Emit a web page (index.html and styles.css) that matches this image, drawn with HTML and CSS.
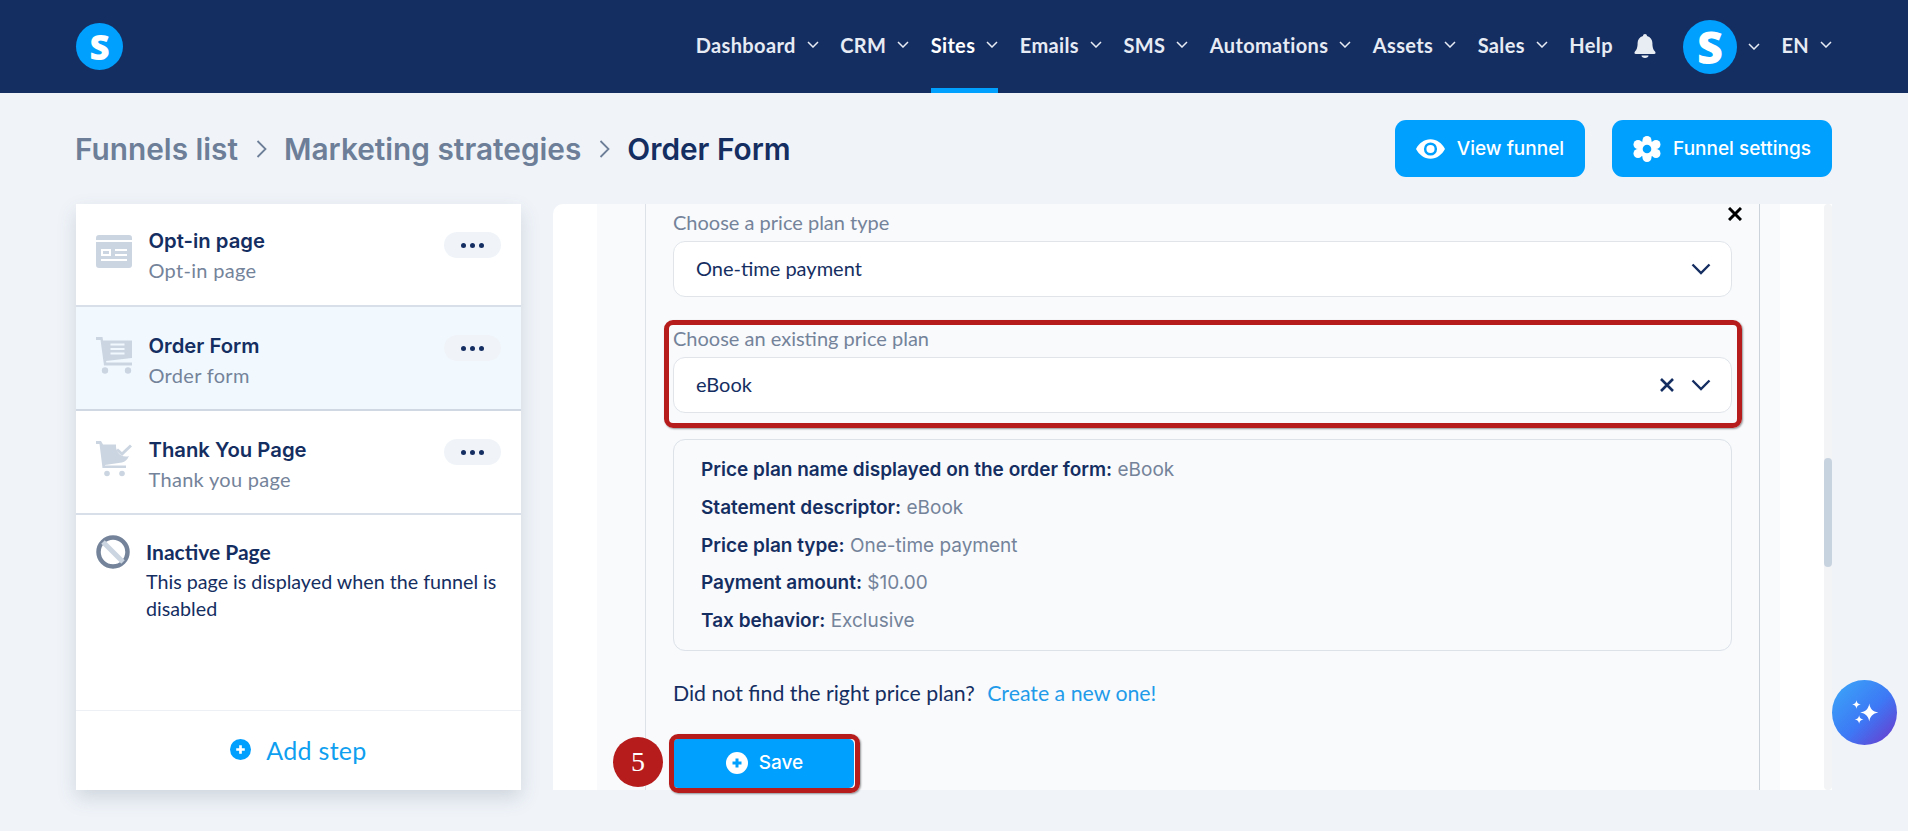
FILE: index.html
```html
<!DOCTYPE html>
<html lang="en">
<head>
<meta charset="utf-8">
<title>Order Form</title>
<link rel="stylesheet" href="styles.css">
</head>
<body>
<header class="topbar">
  <div class="logo">S</div>
  <nav class="nav">
    <a class="nav-item">Dashboard <svg class="chev" viewBox="0 0 12 7"><path d="M1 1l5 5 5-5"/></svg></a>
    <a class="nav-item">CRM <svg class="chev" viewBox="0 0 12 7"><path d="M1 1l5 5 5-5"/></svg></a>
    <a class="nav-item active">Sites <svg class="chev" viewBox="0 0 12 7"><path d="M1 1l5 5 5-5"/></svg></a>
    <a class="nav-item">Emails <svg class="chev" viewBox="0 0 12 7"><path d="M1 1l5 5 5-5"/></svg></a>
    <a class="nav-item">SMS <svg class="chev" viewBox="0 0 12 7"><path d="M1 1l5 5 5-5"/></svg></a>
    <a class="nav-item">Automations <svg class="chev" viewBox="0 0 12 7"><path d="M1 1l5 5 5-5"/></svg></a>
    <a class="nav-item">Assets <svg class="chev" viewBox="0 0 12 7"><path d="M1 1l5 5 5-5"/></svg></a>
    <a class="nav-item">Sales <svg class="chev" viewBox="0 0 12 7"><path d="M1 1l5 5 5-5"/></svg></a>
    <a class="nav-item">Help</a>
    <svg class="bell" viewBox="0 0 22 24"><path d="M11 0c-1.200 0-2 .8-2 1.900C5.500 2.800 3.600 5.700 3.600 9c0 4.800-1 6.800-2.600 8.500-.9 1-.7 2.500.9 2.500h18.200c1.600 0 1.800-1.500.9-2.500-1.600-1.700-2.600-3.700-2.600-8.500 0-3.300-1.900-6.200-5.400-7.100C13 .8 12.200 0 11 0z"/><path d="M7.500 21.500h7c0 1.500-1.500 2.500-3.500 2.500s-3.500-1-3.500-2.500z"/></svg>
    <div class="avatar-wrap">
      <div class="avatar">S</div>
      <svg class="chev" viewBox="0 0 12 7"><path d="M1 1l5 5 5-5"/></svg>
    </div>
    <a class="nav-item">EN <svg class="chev" viewBox="0 0 12 7"><path d="M1 1l5 5 5-5"/></svg></a>
  </nav>
</header>

<main class="page">
  <div class="titlebar">
    <div class="crumbs">
      <span class="crumb">Funnels list</span>
      <svg class="crumb-sep" viewBox="0 0 12 20"><path d="M2 2l8 8-8 8"/></svg>
      <span class="crumb">Marketing strategies</span>
      <svg class="crumb-sep" viewBox="0 0 12 20"><path d="M2 2l8 8-8 8"/></svg>
      <span class="crumb current">Order Form</span>
    </div>
    <div class="actions">
      <button class="btn btn-view">
        <svg class="btn-icon" viewBox="0 0 30 20"><path fill-rule="evenodd" d="M15 0C8.500 0 3.200 4 0 10c3.200 6 8.500 10 15 10s11.800-4 15-10C26.800 4 21.500 0 15 0zm0 3.200a6.800 6.800 0 1 1 0 13.600 6.800 6.800 0 0 1 0-13.600z"/><circle cx="15" cy="10" r="4.200"/></svg>
        View funnel
      </button>
      <button class="btn btn-settings">
        <svg class="btn-icon gear" viewBox="0 0 28 26">
          <circle cx="14" cy="4.500" r="4.500"/><circle cx="23" cy="8.500" r="4.500"/><circle cx="23" cy="17.500" r="4.500"/><circle cx="14" cy="21.500" r="4.500"/><circle cx="5" cy="17.500" r="4.500"/><circle cx="5" cy="8.500" r="4.500"/><circle cx="14" cy="13" r="9"/>
          <circle class="gear-hole" cx="14" cy="13" r="4.300"/>
        </svg>
        Funnel settings
      </button>
    </div>
  </div>

  <div class="workspace">
    <aside class="sidebar">
      <div class="step">
        <svg class="step-icon page-icon" viewBox="0 0 36 33"><path fill-rule="evenodd" d="M3 0h30a3 3 0 0 1 3 3v2H0V3a3 3 0 0 1 3-3zM0 7h36v23a3 3 0 0 1-3 3H3a3 3 0 0 1-3-3zm5 7v7h10v-7zm2 2h6v3H7zm12-2v2h12v-2zm0 5v2h12v-2zM5 24v2h26v-2z"/></svg>
        <div class="step-text">
          <div class="step-title">Opt-in page</div>
          <div class="step-sub">Opt-in page</div>
        </div>
        <div class="dots"><i></i><i></i><i></i></div>
      </div>
      <div class="step selected">
        <svg class="step-icon" viewBox="0 0 36 37"><path fill-rule="evenodd" d="M0 0h6.500L7 3.500h29V21L10 24l.4 1.500H36V28.500H8L4.500 3H0zM14.500 6.500v2h14v-2zm0 4.500v2h14v-2zm0 4.500v2h14v-2z"/><circle cx="9" cy="33.500" r="3.200"/><circle cx="32" cy="33.500" r="3.200"/></svg>
        <div class="step-text">
          <div class="step-title">Order Form</div>
          <div class="step-sub">Order form</div>
        </div>
        <div class="dots"><i></i><i></i><i></i></div>
      </div>
      <div class="step">
        <svg class="step-icon" viewBox="0 0 36 37"><path d="M0 0h5l2 3.500h13c-.5 6 3 12 10 12 1 0 2 0 3-.5-2 4-4 6-7 6.500L9 24v.5h21V27H6.500L3.500 3H0z"/><path class="check" d="M21 8.500l5 4.500 9-8.500"/><circle cx="11" cy="32.500" r="2.800"/><circle cx="26" cy="32.500" r="2.800"/></svg>
        <div class="step-text">
          <div class="step-title">Thank You Page</div>
          <div class="step-sub">Thank you page</div>
        </div>
        <div class="dots"><i></i><i></i><i></i></div>
      </div>
      <div class="inactive">
        <svg class="inactive-icon" viewBox="0 0 34 34"><circle class="ring" cx="17" cy="17" r="14.500"/><path class="slash" d="M7 7l20 20"/></svg>
        <div class="inactive-text">
          <div class="inactive-title">Inactive Page</div>
          <div class="inactive-desc">This page is displayed when the funnel is disabled</div>
        </div>
      </div>
      <div class="add-step">
        <svg class="plus-icon" viewBox="0 0 22 22"><circle class="plus-bg" cx="11" cy="11" r="11"/><path class="plus-mark" d="M11 6.500v9M6.500 11h9"/></svg>
        Add step
      </div>
    </aside>

    <section class="panel">
      <div class="panel-scroll">
        <div class="panel-soft">
          <div class="form-col">
            <svg class="close" viewBox="0 0 14 14"><path d="M1 1l12 12M13 1L1 13"/></svg>
            <div class="field-label">Choose a price plan type</div>
            <div class="select">
              <span class="select-value">One-time payment</span>
              <svg class="select-chev" viewBox="0 0 20 12"><path d="M1.500 1.500L10 10l8.500-8.500"/></svg>
            </div>
            <div class="field-label second">Choose an existing price plan</div>
            <div class="select">
              <span class="select-value">eBook</span>
              <svg class="select-x" viewBox="0 0 14 14"><path d="M1 1l12 12M13 1L1 13"/></svg>
              <svg class="select-chev" viewBox="0 0 20 12"><path d="M1.500 1.500L10 10l8.500-8.500"/></svg>
            </div>
            <div class="info">
              <div class="info-row"><b>Price plan name displayed on the order form:</b> eBook</div>
              <div class="info-row"><b>Statement descriptor:</b> eBook</div>
              <div class="info-row"><b>Price plan type:</b> One-time payment</div>
              <div class="info-row"><b>Payment amount:</b> $10.00</div>
              <div class="info-row"><b>Tax behavior:</b> Exclusive</div>
            </div>
            <div class="hint">Did not find the right price plan? <a class="hint-link">Create a new one!</a></div>
            <button class="save">
              <svg class="save-icon" viewBox="0 0 22 22"><circle class="save-bg" cx="11" cy="11" r="11"/><path class="save-mark" d="M11 6.500v9M6.500 11h9"/></svg>
              Save
            </button>
          </div>
        </div>
      </div>
      <div class="scrollbar"><div class="thumb"></div></div>
    </section>
  </div>

  <div class="mark mark-select"></div>
  <div class="mark mark-save"></div>
  <div class="badge">5</div>
  <div class="ai">
    <svg viewBox="0 0 30 30"><path d="M19 6c.8 5 3.200 7.500 8.500 8.500C22.200 15.500 19.800 18 19 23c-.8-5-3.200-7.500-8.500-8.500C15.800 13.500 18.200 11 19 6z"/><path d="M7 3c.4 2.500 1.500 3.600 4 4-2.500.4-3.600 1.500-4 4-.4-2.500-1.500-3.600-4-4 2.500-.4 3.600-1.500 4-4z"/><path d="M9.500 17c.4 2.400 1.500 3.600 4 4-2.500.4-3.600 1.600-4 4-.4-2.400-1.500-3.600-4-4 2.500-.4 3.600-1.600 4-4z"/></svg>
  </div>
</main>
</body>
</html>
```
FILE: styles.css
```css
* { box-sizing: border-box; }
html, body { margin: 0; height: 100%; }
body {
  background: #f0f4f9;
  font-family: "Lato", "Liberation Sans", sans-serif;
  color: #152e62;
  overflow: hidden;
}
button { font: inherit; border: 0; }

/* top bar */
.topbar {
  height: 93px;
  background: #152e62;
  padding: 0 76px;
  display: flex;
  align-items: center;
  justify-content: space-between;
}
.logo, .avatar {
  border-radius: 50%;
  background: #00a0ff;
  color: #fff;
  font-family: "Open Sans", sans-serif;
  font-weight: 800;
  display: flex;
  align-items: center;
  justify-content: center;
  flex: none;
}
.logo { width: 47px; height: 47px; font-size: 35px; }
.avatar { width: 54px; height: 54px; font-size: 45px; }
.nav { display: flex; align-items: center; height: 93px; gap: 21.500px; }
.nav-item {
  height: 93px;
  padding-bottom: 4px;
  display: flex;
  align-items: center;
  gap: 11px;
  color: #e6ebf4;
  font-size: 20px;
  font-weight: 700;
  letter-spacing: 0.35px;
  border-bottom: 5px solid transparent;
  border-top: 5px solid transparent;
}
.nav-item.active { color: #fff; border-bottom-color: #00a0ff; }
.chev { width: 12px; height: 7px; fill: none; stroke: #e6ebf4; stroke-width: 1.500; margin-top: -1px; }
.bell { width: 22px; height: 24px; fill: #e8edf4; margin-top: -2px; }
.avatar-wrap { display: flex; align-items: center; gap: 11px; margin-left: 5px; }

/* page */
.page { padding: 0 76px; }
.titlebar {
  height: 111px;
  display: flex;
  align-items: center;
  justify-content: space-between;
}
.crumbs { display: flex; align-items: center; gap: 16.500px; margin-left: -1px; }
.crumb { font-family: "Inter", sans-serif; font-size: 29.800px; font-weight: 600; color: #6d7f98; }
.crumb.current { color: #152e62; }
.crumb-sep { width: 13px; height: 20px; fill: none; stroke: #6d7f98; stroke-width: 1.800; }
.actions { display: flex; gap: 27px; }
.btn {
  height: 57px;
  padding: 0 21px;
  border-radius: 11px;
  background: #00a0ff;
  color: #fff;
  font-family: "Inter", sans-serif;
  font-size: 19px;
  font-weight: 500;
  display: flex;
  align-items: center;
  gap: 12px;
}
.btn-icon { width: 29px; height: 20px; fill: #fff; }
.btn-icon.gear { width: 28px; height: 26px; }
.gear-hole { fill: #00a0ff; }

/* workspace */
.workspace { display: flex; gap: 32px; height: 586px; }
.sidebar {
  width: 445px;
  flex: none;
  background: #fff;
  display: flex;
  flex-direction: column;
  box-shadow: 0 8px 18px rgba(60, 75, 100, 0.18);
}
.step {
  height: 104px;
  padding: 27px 20px 0;
  display: flex;
  align-items: flex-start;
  border-bottom: 2px solid #d9dfe8;
}
.step:first-child { height: 103px; padding-top: 25px; }
.step.selected { background: #f1f9ff; border-bottom-color: #cfd8e3; }
.step-icon { width: 36px; height: 37px; flex: none; fill: #cbd5e1; margin-top: 3px; }
.step-icon.page-icon { height: 33px; margin-top: 6px; }
.step-icon .check { fill: none; stroke: #cbd5e1; stroke-width: 3; }
.step-text { margin-left: 16.500px; flex: 1; }
.step-title { font-family: "Inter", sans-serif; font-size: 20.300px; font-weight: 600; line-height: 24px; color: #152e62; }
.step-sub { margin-top: 5px; font-size: 20px; letter-spacing: 0.3px; line-height: 24px; color: #74839a; }
.dots {
  width: 57px;
  height: 26px;
  margin-top: 1px;
  border-radius: 13px;
  background: #f0f4f9;
  display: flex;
  align-items: center;
  justify-content: center;
  gap: 4px;
}
.step:first-child .dots { margin-top: 3px; }
.dots i { width: 5px; height: 5px; border-radius: 50%; background: #152e62; }
.inactive { flex: 1; display: flex; padding: 20px 12px 0 20px; align-items: flex-start; }
.inactive-icon { width: 34px; height: 34px; flex: none; }
.ring { fill: none; stroke: #74839a; stroke-width: 4.500; }
.slash { stroke: #cbd5e1; stroke-width: 5; }
.inactive-text { margin-left: 16px; }
.inactive-title { font-size: 21px; font-weight: 700; line-height: 28px; margin-top: 3px; color: #152e62; }
.inactive-desc { font-size: 19.700px; line-height: 27px; color: #152e62; margin-top: 2px; }
.add-step {
  height: 80px;
  flex: none;
  border-top: 1px solid #edf0f4;
  padding-bottom: 2px;
  display: flex;
  align-items: center;
  justify-content: center;
  gap: 15px;
  color: #0f9ff0;
  font-size: 25px;
  letter-spacing: 0.3px;
}
.plus-icon { width: 21px; height: 21px; }
.plus-bg { fill: #00a0ff; }
.plus-mark { stroke: #fff; stroke-width: 2.800; }

/* main panel */
.panel {
  flex: 1;
  min-width: 0;
  display: flex;
  background: #fff;
  border-radius: 10px 0 0 0;
  overflow: hidden;
}
.panel-scroll { flex: 1; padding: 0 44px; }
.panel-soft { height: 100%; background: #f8fafc; padding: 0 20px 0 48px; }
.form-col {
  position: relative;
  height: 100%;
  padding: 7px 27px 0 27px;
  border-left: 1px solid #dde2e9;
  border-right: 1px solid #cdd3db;
}
.close { position: absolute; top: 3px; right: 17px; width: 14px; height: 14px; fill: none; stroke: #000; stroke-width: 3; }
.field-label { font-size: 20px; line-height: 22px; color: #74839a; height: 30px; }
.field-label.second { margin-top: 30px; }
.select {
  height: 56px;
  background: #fff;
  border: 1px solid #e1e5ea;
  border-radius: 12px;
  padding: 0 20px 0 22px;
  display: flex;
  align-items: center;
  gap: 17px;
}
.select-value { flex: 1; font-size: 20px; color: #152e62; padding-bottom: 2px; }
.select-chev { width: 20px; height: 12px; fill: none; stroke: #152e62; stroke-width: 2.400; }
.select-x { width: 14px; height: 14px; fill: none; stroke: #152e62; stroke-width: 2.600; }
.info {
  height: 212px;
  margin-top: 26px;
  border: 1px solid #dde2e9;
  border-radius: 12px;
  padding: 11px 27px;
  font-family: "Inter", sans-serif;
  font-size: 19px;
  color: #74839a;
}
.info-row { height: 37.800px; line-height: 37.800px; white-space: nowrap; }
.info-row b { font-weight: 600; color: #152e62; }
.hint { margin-top: 29px; font-size: 21.300px; line-height: 26px; color: #152e62; }
.hint-link { color: #1f9bea; margin-left: 7px; }
.save {
  margin-top: 33px;
  width: 181px;
  height: 49px;
  padding: 0 0 2px 2px;
  background: #00a0ff;
  color: #fff;
  border-radius: 5px;
  font-family: "Inter", sans-serif;
  font-size: 19px;
  font-weight: 500;
  display: flex;
  align-items: center;
  justify-content: center;
  gap: 11px;
}
.save-icon { width: 22px; height: 22px; }
.save-bg { fill: #fff; }
.save-mark { stroke: #00a0ff; stroke-width: 3; }
.scrollbar { width: 8px; flex: none; background: #f3f4f6; padding-top: 254px; border-radius: 4px; }
.thumb { height: 109px; background: #c8d3e0; border-radius: 4px; }

/* overlays */
.mark {
  position: absolute;
  border: 5px solid #b71c1c;
  border-radius: 9px;
  box-shadow: 1px 1px 2px rgba(0, 0, 0, 0.4);
}
.mark-select { left: 664px; top: 320px; width: 1078px; height: 108px; }
.mark-save { left: 669px; top: 734px; width: 191px; height: 59px; }
.badge {
  position: absolute;
  left: 613px;
  top: 737px;
  width: 50px;
  height: 50px;
  border-radius: 50%;
  background: #b71c1c;
  color: #fff;
  font-family: "Liberation Serif", serif;
  font-size: 28px;
  display: flex;
  align-items: center;
  justify-content: center;
}
.ai {
  position: absolute;
  left: 1832px;
  top: 680px;
  width: 65px;
  height: 65px;
  border-radius: 50%;
  background: linear-gradient(135deg, #3ba0f8 10%, #3d78f5 55%, #6f35c9 100%);
  display: flex;
  align-items: center;
  justify-content: center;
}
.ai svg { width: 32px; height: 32px; fill: #fff; }
```
